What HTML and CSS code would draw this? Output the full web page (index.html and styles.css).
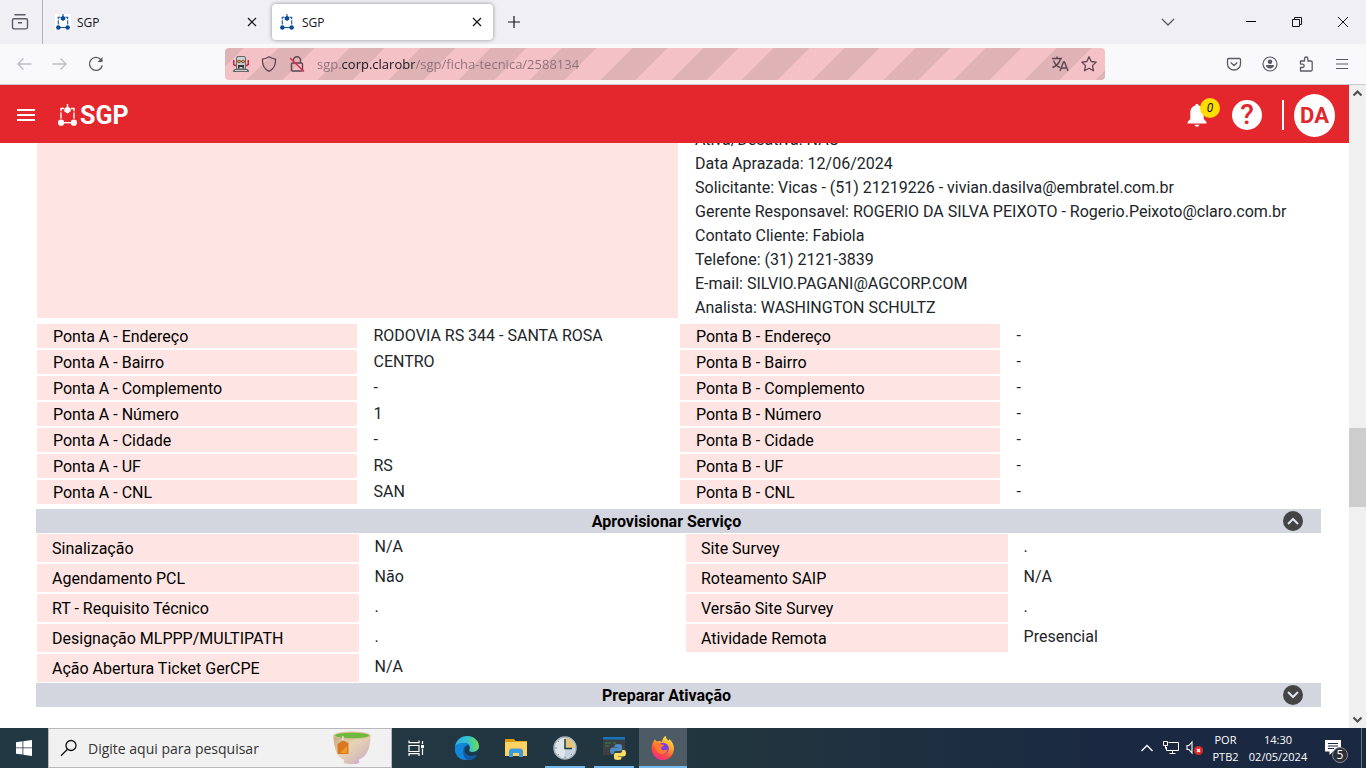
FILE: index.html
```html
<!DOCTYPE html>
<html lang="pt-BR">
<head>
<meta charset="utf-8">
<meta name="viewport" content="width=device-width, initial-scale=1">
<title>SGP</title>
<link rel="stylesheet" href="styles.css">
</head>
<body>
<svg class="defs" aria-hidden="true">
  <symbol id="nodes" viewBox="0 0 19 22">
    <g fill="none" stroke="currentColor" stroke-width="1.4"><path d="M9.500 0v5"/><path d="M3 14.500V4.500H6M16 14.500V4.500H13" stroke-dasharray="6 1.200"/><path d="M3 18.700h13"/></g>
    <g fill="currentColor"><path d="M9.500 2.500 12.700 4.500v3l-3.200 2-3.200-2v-3z"/><circle cx="3.100" cy="18.700" r="3.100"/><circle cx="15.900" cy="18.700" r="3.100"/></g>
  </symbol>
  <symbol id="cross" viewBox="0 0 16 16"><path d="M4 4l8 8M12 4l-8 8" fill="none" stroke="currentColor" stroke-width="1.200"/></symbol>
</svg>

<header class="tabbar">
  <button class="view-btn" aria-label="Firefox View">
    <svg width="18" height="18" viewBox="0 0 18 18" fill="none" stroke="currentColor" stroke-width="1.400"><path d="M4 1.700h10" stroke-linecap="round"/><path d="M3 5.700h12c1 0 1.500.6 1.500 1.500v7c0 1-.8 1.700-1.800 1.700H3.300c-1 0-1.800-.7-1.800-1.700v-7c0-1 .5-1.500 1.500-1.500zM7 9.700h4"/></svg>
  </button>
  <nav class="tabs" aria-label="Abas">
    <div class="tab">
      <span class="fav fav-white"><svg width="14" height="16"><use href="#nodes"/></svg></span>
      <span class="tab-title">SGP</span>
      <button class="tab-close" aria-label="Fechar aba"><svg width="16" height="16"><use href="#cross"/></svg></button>
    </div>
    <div class="tab tab-active">
      <span class="fav"><svg width="14" height="16"><use href="#nodes"/></svg></span>
      <span class="tab-title">SGP</span>
      <button class="tab-close" aria-label="Fechar aba"><svg width="16" height="16"><use href="#cross"/></svg></button>
    </div>
    <button class="new-tab" aria-label="Nova aba"><svg width="12" height="12" viewBox="0 0 12 12" fill="none" stroke="currentColor" stroke-width="1.200"><path d="M6 0v12M0 6h12"/></svg></button>
  </nav>
  <button class="list-tabs" aria-label="Listar abas"><svg width="14" height="8" viewBox="0 0 14 8" fill="none" stroke="currentColor" stroke-width="1.300"><path d="M1 1l6 6 6-6"/></svg></button>
  <div class="window-btns">
    <button aria-label="Minimizar"><svg width="10" height="10" viewBox="0 0 10 10"><path d="M0 4h10v1H0z"/></svg></button>
    <button aria-label="Restaurar"><svg width="10" height="10" viewBox="0 0 10 10" fill="none" stroke="currentColor"><path d="M.5 2.500h7v7h-7zM2.500 2.500v-2h7v7h-2"/></svg></button>
    <button aria-label="Fechar"><svg width="10" height="10" viewBox="0 0 10 10" fill="none" stroke="currentColor"><path d="M0 0l10 10M10 0L0 10"/></svg></button>
  </div>
</header>

<div class="toolbar">
  <div class="nav-btns">
    <button disabled aria-label="Voltar"><svg width="16" height="16" viewBox="0 0 16 16" fill="none" stroke="currentColor" stroke-width="1.300"><path d="M15.500 8H1.500M7.500 2.500 2 8l5.500 5.500"/></svg></button>
    <button disabled aria-label="Avançar"><svg width="16" height="16" viewBox="0 0 16 16" fill="none" stroke="currentColor" stroke-width="1.300"><path d="M.5 8h14M8.500 2.500 14 8l-5.500 5.500"/></svg></button>
    <button aria-label="Recarregar"><svg width="16" height="16" viewBox="0 0 16 16" fill="none" stroke="currentColor" stroke-width="1.400"><path d="M14.300 9.500A6.500 6.500 0 1 1 13 3.700L14 5"/><path d="M14.500 1v5h-5z" fill="currentColor" stroke="none"/></svg></button>
  </div>
  <div class="urlbar">
    <svg width="16" height="16" viewBox="0 0 16 16"><path d="M0 4h1.500v4L3 9v1.500L0 9zM16 4h-1.500v4L13 9v1.500L16 9z" fill="#c8203f"/><path d="M4.500 0h7L13 1.500V13H3V1.500z" fill="#66666b"/><path d="M5 1h6l1 1v10.500H4V2z" fill="#cfcfd2"/><circle cx="6" cy="5.500" r="1.800" fill="#5a4a44"/><circle cx="10" cy="5.500" r="1.800" fill="#5a4a44"/><circle cx="6" cy="5.500" r="1" fill="#f49a28"/><circle cx="10" cy="5.500" r="1" fill="#f49a28"/><path d="M5 9h6v3.500h-1.500V11h-3v1.500H5z" fill="#333338"/><path d="M0 16v-1.500L1.500 13h13l1.500 1.500V16z" fill="#66666b"/><path d="M2 14h12v1H2z" fill="#cfcfd2"/></svg>
    <svg width="16" height="16" viewBox="0 0 16 16" fill="none" stroke="currentColor" stroke-width="1.300"><path d="M8 .8c2 1.400 4 2 6.500 2.300.3 6-1.500 10-6.500 12.200C3 13.100 1.200 9.100 1.500 3.100 4 2.800 6 2.200 8 .8z"/></svg>
    <svg width="16" height="16" viewBox="0 0 16 16" fill="none" stroke="currentColor" stroke-width="1.400"><path d="M3.500 7h9c.6 0 1 .4 1 1v6c0 .6-.4 1-1 1h-9c-.6 0-1-.4-1-1V8c0-.6.400-1 1-1zM4.500 5V4.200a3.500 3.500 0 0 1 7 0V7"/><path d="M1 2l14 13.500" stroke="#e22850" stroke-width="1.500"/></svg>
    <input class="url-input" type="text" aria-label="Endereço" value="sgp.corp.clarobr/sgp/ficha-tecnica/2588134">
    <button aria-label="Traduzir"><svg width="18" height="16" viewBox="0 0 18 16" fill="none" stroke="currentColor" stroke-width="1.400"><path d="M1 2.500h10M6 .5v2M2.500 4.500c1 3 3 5.500 6.500 7M9.500 2.500C8.500 7 5.500 10 1.500 11.500M9 15l3.500-9h1L17 15M10.300 12h5.500"/></svg></button>
    <button aria-label="Favoritar"><svg width="16" height="16" viewBox="0 0 16 16" fill="none" stroke="currentColor" stroke-width="1.300" stroke-linejoin="round"><path d="M8 .8l2.200 4.700 5 .6-3.700 3.500 1 5.200L8 12.300l-4.500 2.500 1-5.200L.8 6.100l5-.6z"/></svg></button>
  </div>
  <div class="tool-btns">
    <button aria-label="Pocket"><svg width="16" height="16" viewBox="0 0 16 16" fill="none" stroke="currentColor" stroke-width="1.300"><path d="M2.500 2.500h11c.7 0 1 .4 1 1V8a6.500 6 0 0 1-13 0V3.500c0-.6.300-1 1-1zM4.700 6.500 8 9.500l3.300-3"/></svg></button>
    <button aria-label="Conta"><svg width="16" height="16" viewBox="0 0 16 16" fill="currentColor"><circle cx="8" cy="8" r="7" fill="none" stroke="currentColor" stroke-width="1.200"/><circle cx="8" cy="5.800" r="2.300"/><path d="M4 9h8c0 2.200-1.800 3.600-4 3.600S4 11.200 4 9z"/></svg></button>
    <button aria-label="Extensões"><svg width="16" height="16" viewBox="0 0 16 16" fill="none" stroke="currentColor" stroke-width="1.300" stroke-linejoin="round"><path d="M6.500 5V2.700a1.700 1.700 0 0 1 3.400 0V5h3c.8 0 1.300.5 1.300 1.300v7.400c0 .8-.5 1.300-1.300 1.300H2.500v-3.500h2a1.700 1.700 0 0 0 0-3.400h-2V5z"/></svg></button>
    <button aria-label="Menu do navegador"><svg width="14" height="12" viewBox="0 0 14 12" fill="none" stroke="currentColor" stroke-width="1.200"><path d="M1 1.500h12M1 6h12M1 10.500h12"/></svg></button>
  </div>
</div>

<div class="viewport">
  <div class="app">
    <header class="app-header">
      <button class="menu-btn" aria-label="Menu"><svg width="18" height="12" viewBox="0 0 18 12" fill="currentColor"><path d="M0 0h18v2H0zM0 5h18v2H0zM0 10h18v2H0z"/></svg></button>
      <a class="brand" href="#"><svg width="19" height="22"><use href="#nodes"/></svg><span>SGP</span></a>
      <div class="app-actions">
        <button class="bell" aria-label="Notificações"><svg width="20" height="24" viewBox="0 0 20 24" fill="currentColor"><path d="M10 1c1 0 1.700.6 1.700 1.600 3.300.8 5 3.400 5 7v6.500L19.500 19v1.500H.5V19l2.800-2.900V9.600c0-3.600 1.700-6.200 5-7C8.300 1.600 9 1 10 1zM7.700 21.800h4.600c0 1.300-1 2-2.300 2s-2.300-.7-2.300-2z"/></svg><span class="badge">0</span></button>
        <button class="help" aria-label="Ajuda">?</button>
        <span class="divider"></span>
        <button class="avatar">DA</button>
      </div>
    </header>

    <main class="content">
      <table class="sheet sheet-notes">
        <tr>
          <th scope="row"></th>
          <td><div class="notes">Ativa/Desativa: NÃO<br>Data Aprazada: 12/06/2024<br>Solicitante: Vicas - (51) 21219226 - vivian.dasilva@embratel.com.br<br>Gerente Responsavel: ROGERIO DA SILVA PEIXOTO - Rogerio.Peixoto@claro.com.br<br>Contato Cliente: Fabiola<br>Telefone: (31) 2121-3839<br>E-mail: SILVIO.PAGANI@AGCORP.COM<br>Analista: WASHINGTON SCHULTZ</div></td>
        </tr>
      </table>
      <table class="sheet sheet-ends">
        <tr><th scope="row">Ponta A - Endereço</th><td>RODOVIA RS 344 - SANTA ROSA</td><th scope="row">Ponta B - Endereço</th><td>-</td></tr>
        <tr><th scope="row">Ponta A - Bairro</th><td>CENTRO</td><th scope="row">Ponta B - Bairro</th><td>-</td></tr>
        <tr><th scope="row">Ponta A - Complemento</th><td>-</td><th scope="row">Ponta B - Complemento</th><td>-</td></tr>
        <tr><th scope="row">Ponta A - Número</th><td>1</td><th scope="row">Ponta B - Número</th><td>-</td></tr>
        <tr><th scope="row">Ponta A - Cidade</th><td>-</td><th scope="row">Ponta B - Cidade</th><td>-</td></tr>
        <tr><th scope="row">Ponta A - UF</th><td>RS</td><th scope="row">Ponta B - UF</th><td>-</td></tr>
        <tr><th scope="row">Ponta A - CNL</th><td>SAN</td><th scope="row">Ponta B - CNL</th><td>-</td></tr>
      </table>

      <div class="section-bar">
        <h2>Aprovisionar Serviço</h2>
        <button class="toggle" aria-label="Recolher" aria-expanded="true"><svg width="12" height="8" viewBox="0 0 12 8" fill="none" stroke="currentColor" stroke-width="2"><path d="M1 7l5-5 5 5"/></svg></button>
      </div>
      <div class="service">
        <table class="sheet sheet-service">
          <tr><th scope="row">Sinalização</th><td>N/A</td></tr>
          <tr><th scope="row">Agendamento PCL</th><td>Não</td></tr>
          <tr><th scope="row">RT - Requisito Técnico</th><td>.</td></tr>
          <tr><th scope="row">Designação MLPPP/MULTIPATH</th><td>.</td></tr>
          <tr><th scope="row">Ação Abertura Ticket GerCPE</th><td>N/A</td></tr>
        </table>
        <table class="sheet sheet-service">
          <tr><th scope="row">Site Survey</th><td>.</td></tr>
          <tr><th scope="row">Roteamento SAIP</th><td>N/A</td></tr>
          <tr><th scope="row">Versão Site Survey</th><td>.</td></tr>
          <tr><th scope="row">Atividade Remota</th><td>Presencial</td></tr>
        </table>
      </div>

      <div class="section-bar section-bar-next">
        <h2>Preparar Ativação</h2>
        <button class="toggle" aria-label="Expandir" aria-expanded="false"><svg width="12" height="8" viewBox="0 0 12 8" fill="none" stroke="currentColor" stroke-width="2"><path d="M1 1l5 5 5-5"/></svg></button>
      </div>
    </main>
  </div>
  <div class="scrollbar" aria-hidden="true">
    <svg width="17" height="17" viewBox="0 0 17 17" fill="none" stroke="currentColor" stroke-width="2.200"><path d="M4.500 10.500l4-4 4 4"/></svg>
    <span class="track-before"></span><span class="thumb"></span><span class="track-after"></span>
    <svg width="17" height="17" viewBox="0 0 17 17" fill="none" stroke="currentColor" stroke-width="2.200"><path d="M4.500 6.500l4 4 4-4"/></svg>
  </div>
</div>

<footer class="taskbar">
  <button class="task" aria-label="Iniciar"><svg width="16" height="16" viewBox="0 0 16 16" fill="#fff"><path d="M0 2.200 6.500 1.300v6.200H0zM7.300 1.200 16 0v7.500H7.300zM0 8.300h6.500v6.300L0 13.700zM7.300 8.300H16V16l-8.700-1.200z"/></svg></button>
  <label class="search">
    <svg width="18" height="18" viewBox="0 0 18 18" fill="none" stroke="#111" stroke-width="1.300"><circle cx="11" cy="6.500" r="5"/><path d="M7.500 10.200 1 16.800"/></svg>
    <input type="text" aria-label="Pesquisar" placeholder="Digite aqui para pesquisar">
    <svg width="38" height="34" viewBox="0 0 38 34"><defs><linearGradient id="cup" x1="0" y1="0" x2="1" y2="1"><stop offset="0" stop-color="#c4a57c"/><stop offset=".4" stop-color="#e6d4b4"/><stop offset=".7" stop-color="#d8bfb8"/><stop offset="1" stop-color="#c88cf0"/></linearGradient></defs><path d="M.5 4c0 13 3 22 11 25-1 1-1 3 0 3.300 4 1.200 10 1.200 14 0 1-.3 1-2 0-3.300 9-4 12-12 12-25z" fill="url(#cup)"/><ellipse cx="19" cy="4.500" rx="18.500" ry="3.900" fill="#d9c197"/><ellipse cx="19" cy="4.500" rx="17" ry="2.800" fill="#6fb83e"/><path d="M10 5v6" stroke="#ddd" stroke-width="1.500"/><path d="M4.500 13l5.500-3.500 5.500 2.500V23h-11z" fill="#d9781f"/><path d="M7 22l7-7v7z" fill="#ef9a2c"/></svg>
  </label>
  <button class="task" aria-label="Visão de tarefas"><svg width="17" height="16" viewBox="0 0 17 16" fill="none" stroke="#fff" stroke-width="1.200"><path d="M1 5.500h10v6H1zM1 .5v2.200h10V.5M1 16v-2.300h10V16M14.500 1v3M14.500 8.500V15"/><path d="M13 5h3v3h-3z" fill="#fff" stroke="none"/></svg></button>
  <div class="apps">
    <button class="task" aria-label="Microsoft Edge"><svg width="24" height="24" viewBox="0 0 24 24"><defs><linearGradient id="edge" x1="0" y1=".4" x2="1" y2=".3"><stop offset="0" stop-color="#2db0e8"/><stop offset=".55" stop-color="#35c1c9"/><stop offset="1" stop-color="#72e04c"/></linearGradient></defs><circle cx="12" cy="12" r="12" fill="#0b62b8"/><path d="M0 11C1 4 6 0 12 0c7 0 12 5 12 10 0 4-3 6-6.500 6-3 0-3.700-1-3.300-2 2-4-.5-7-4.500-7C5 7 1 9 0 11z" fill="url(#edge)"/><path d="M0 12c1-4 5-5.500 9-5 1.500.2 3 1 4 2-3-.5-5 2-4.700 5.500C8.700 19 12 23 17 22.500 7 27-1 20 0 12z" fill="#1287d8"/><path d="M14.200 14c-.4 1 .3 2 3.300 2 2.500 0 5-1 6.300-3.500l.7 4-3.200 2.500c-6 2.500-12 0-11.800-5 0-2 1.500-3.800 3.500-4.500 1.500 1 2 2.800 1.200 4.500z" fill="#1d3a4c"/><path d="M8.500 14c.3 5 4.500 9 11 6.500 1-.4 2-1.200 2.800-2C20 23 16 24.500 12.500 24 9 22.500 7.500 18 8.500 14z" fill="#1557a0"/></svg></button>
    <button class="task" aria-label="Explorador de arquivos"><svg width="22" height="18" viewBox="0 0 22 18"><path d="M0 0h9l1.500 2H22v15H0z" fill="#e8a920"/><path d="M0 3h22v14H0z" fill="#fcd462"/><path d="M0 0h9v3H0z" fill="#d99a12"/><path d="M4 18v-6.500L6 9.500h10l2 2V18h-4v-4H8v4z" fill="#3e9ae0"/></svg></button>
    <button class="task task-running" aria-label="Relógio"><svg width="24" height="24" viewBox="0 0 24 24"><circle cx="12" cy="12" r="11" fill="#dce5ea" stroke="#a9b3b8" stroke-width="1.500"/><path d="M12 12V2a10 10 0 0 1 10 10z" fill="#e3c478"/><path d="M12 12h10a10 10 0 0 1-10 10z" fill="#c2d3dd"/><path d="M12 3v9.500h7" fill="none" stroke="#1e3550" stroke-width="1.500"/><path d="M12 20v2M2 12h2M5 5l1 1M5 19l1-1M19 19l-1-1" stroke="#7b8d98"/></svg></button>
    <button class="task task-running" aria-label="Python"><svg width="24" height="24" viewBox="0 0 24 24"><path d="M1 1h22v18H1z" fill="#3c3f41"/><path d="M1 1h22v2.500H1z" fill="#1673ba"/><path d="M3 7h6M3 10h4M11 7h3" stroke="#2d8a50" stroke-width="1.200"/><path d="M16 8c3 0 4 .8 4 2.500V13c0 1.500-1 2-2 2h-4c-1.500 0-2.200 1-2.200 3H10c-1.500 0-2-1.500-2-3.500S9 11.500 11 11.500h5V11h-3.500v-1c0-1.300 1-2 3.500-2z" fill="#4c8bc4"/><path d="M16 24c-3 0-4-.8-4-2.500V19c0-1.500 1-2 2-2h4c1.500 0 2.200-1 2.200-3H22c1.500 0 2 1.500 2 3.500s-1 3-3 3h-5v.5h3.500v1c0 1.300-1 2-3.500 2z" fill="#ffdd63"/></svg></button>
    <button class="task task-running task-focused" aria-label="Firefox"><svg width="24" height="24" viewBox="0 0 24 24"><defs><linearGradient id="fox" x1=".8" y1="0" x2=".3" y2="1"><stop offset="0" stop-color="#fff04a"/><stop offset=".4" stop-color="#ffa02c"/><stop offset=".7" stop-color="#ff4f3c"/><stop offset="1" stop-color="#f02a8c"/></linearGradient></defs><path d="M4 3c.3 1 1 2 2 2.600C8 4.700 9.500 5 11 6c.2-3 1.800-5.200 3.800-6 0 2 1 3.200 2.700 4.600.5-.3.6-1 .5-1.600 3.500 2.500 5 6 5 9.500A11.200 11.200 0 0 1 12 24 11.200 11.200 0 0 1 .7 12.500C.7 9 2 6 4 3z" fill="url(#fox)"/><circle cx="12" cy="12.500" r="5.800" fill="#7a3fe0"/><path d="M4 8c2-1.500 4.500-1.200 6 .3 1.200.2 2.800.2 3 1-.3 1.200-2 1.400-2.700 2.300-.3 1 0 1.800.7 2.300 2 1 4-.6 5.500.2-1 3-3.500 4.400-6 4-4-.7-7-5-6.500-10.100z" fill="#ff7a30"/></svg></button>
  </div>
  <div class="tray">
    <button aria-label="Ícones ocultos"><svg width="12" height="8" viewBox="0 0 12 8" fill="none" stroke="#fff" stroke-width="1.300"><path d="M.5 7 6 1.500 11.500 7"/></svg></button>
    <button aria-label="Rede"><svg width="17" height="14" viewBox="0 0 17 14" fill="none" stroke="#fff"><path d="M5.500 1.500h10v8h-12V6M9.500 9.500v3M6.500 12.500h6M.5.500h4v4h-4zM2.500 4.500v3h1"/></svg></button>
    <button aria-label="Volume"><svg width="18" height="16" viewBox="0 0 18 16"><path d="M1 5.500h2l3-3.500v11l-3-3.500H1z" fill="none" stroke="#fff" stroke-width="1.100"/><circle cx="12.500" cy="10.500" r="4.500" fill="#e02828"/><path d="M11 9l3 3M14 9l-3 3" stroke="#fff" stroke-width="1.300"/></svg></button>
    <button class="lang">POR<br>PTB2</button>
    <button class="clock">14:30<br>02/05/2024</button>
    <button class="action-center" aria-label="5 notificações"><svg width="16" height="16" viewBox="0 0 16 16"><path d="M0 0h16v11.500h-8L4.500 15v-3.500H0z" fill="#fff"/><path d="M3 3.500h10M3 6h10M3 8.500h6" stroke="#1b2a42" stroke-width="1.200"/></svg><span class="count">5</span></button>
    <button class="show-desktop" aria-label="Mostrar área de trabalho"></button>
  </div>
</footer>
</body>
</html>
```
FILE: styles.css
```css
* {
  box-sizing: border-box;
}

html,
body {
  height: 100%;
}

body {
  margin: 0;
  display: flex;
  flex-direction: column;
  overflow: hidden;
  background: #fff;
  color: #15141a;
  font-family: "Open Sans", "Noto Sans", sans-serif;
  font-size: 12px;
}

button {
  display: flex;
  align-items: center;
  justify-content: center;
  margin: 0;
  padding: 0;
  border: 0;
  background: none;
  color: inherit;
  font: inherit;
}

svg {
  display: block;
  flex: none;
}

.defs {
  display: none;
}

/* Browser tabs */

.tabbar {
  display: flex;
  flex: none;
  height: 44px;
  background: #f0eff4;
}

.view-btn {
  width: 43px;
  padding-right: 3px;
  border-right: 1px solid #b4b3b9;
  color: #5b5b66;
}

.tabs {
  display: flex;
  flex: 1;
  align-items: center;
  gap: 4px;
  padding-left: 4px;
}

.tab {
  display: flex;
  align-items: center;
  width: 221px;
  height: 36px;
  padding: 0 4px 0 8px;
  border-radius: 4px;
}

.tab-active {
  background: #fff;
  box-shadow: 0 0 4px rgba(0, 0, 0, 0.4);
}

.fav {
  display: flex;
  width: 16px;
  margin-right: 6px;
  color: #0b4a94;
}

.fav-white {
  justify-content: center;
  background: #fff;
}

.tab-title {
  flex: 1;
}

.tab-close {
  width: 24px;
  height: 24px;
}

.new-tab {
  width: 34px;
  height: 32px;
}

.list-tabs {
  width: 36px;
  margin-right: 42px;
  color: #5b5b66;
}

.window-btns {
  display: flex;
}

.window-btns button {
  width: 46px;
}

/* Browser toolbar */

.toolbar {
  display: flex;
  flex: none;
  align-items: center;
  height: 41px;
  padding: 0 6px;
  border-bottom: 1px solid #ccccd0;
  background: #f9f9fb;
  color: #5b5b66;
}

.nav-btns,
.tool-btns {
  display: flex;
}

.nav-btns button,
.tool-btns button {
  width: 36px;
  height: 32px;
}

.nav-btns button:disabled {
  color: #bebec3;
}

.urlbar {
  display: flex;
  flex: 1;
  align-items: center;
  gap: 12px;
  height: 32px;
  margin: 0 111px;
  padding: 0 8px;
  border-radius: 4px;
  background: repeating-linear-gradient(135deg, #dfb2b6 0 13px, #f4c2c6 13px 38px, #dfb2b6 38px 50px);
  color: #5b464e;
}

.url-input {
  flex: 1;
  min-width: 0;
  height: 24px;
  padding: 0;
  border: 0;
  outline: 0;
  background: linear-gradient(90deg, #8f6f76 0 25px, #15141a 25px 98px, #8f6f76 98px);
  -webkit-background-clip: text;
  background-clip: text;
  color: transparent;
  font: inherit;
  font-size: 13px;
}

/* Page */

.viewport {
  display: flex;
  flex: 1;
  min-height: 0;
}

.app {
  display: flex;
  flex: 1;
  flex-direction: column;
  min-width: 0;
  font-family: Roboto, "Liberation Sans", sans-serif;
  font-size: 16px;
}

.app-header {
  display: flex;
  flex: none;
  align-items: center;
  height: 58px;
  padding: 2px 14px 0 17px;
  background: #e4262d;
  color: #fff;
}

.menu-btn {
  height: 32px;
}

.brand {
  display: flex;
  align-items: center;
  gap: 3px;
  margin-left: 23px;
  color: #fff;
  font-size: 25px;
  font-weight: 700;
  line-height: 32px;
  text-decoration: none;
}

.brand span {
  padding-top: 2px;
}

.app-actions {
  display: flex;
  align-items: center;
  margin-left: auto;
}

.bell {
  position: relative;
  margin-right: 25px;
}

.badge {
  position: absolute;
  top: -5px;
  left: 13px;
  width: 20px;
  height: 20px;
  border-radius: 50%;
  background: #fd0;
  color: #111;
  font-size: 12px;
  font-style: italic;
  line-height: 20px;
  text-align: center;
}

.help {
  width: 30px;
  height: 30px;
  border-radius: 50%;
  background: #fff;
  color: #e4262d;
  font-size: 28px;
  font-weight: 500;
  line-height: 30px;
}

.divider {
  width: 2px;
  height: 30px;
  margin: 0 10px 0 20px;
  background: #fff;
}

.avatar {
  width: 41px;
  height: 43px;
  border-radius: 50%;
  background: #fff;
  color: #e4262d;
  font-size: 22px;
  font-weight: 700;
}

.content {
  flex: 1;
  min-height: 0;
  overflow: hidden;
  padding: 0 28px 0 36px;
}

.sheet {
  width: 100%;
  border-collapse: separate;
  border-spacing: 2px;
  table-layout: fixed;
}

.sheet th,
.sheet td {
  padding: 0 15px;
  line-height: 24px;
  text-align: left;
}

.sheet th {
  padding-top: 2px;
  background: #fee5e3;
  color: #000;
  font-weight: 400;
  line-height: 22px;
}

.sheet td {
  color: #212529;
}

.sheet-notes,
.sheet-ends {
  width: calc(100% + 3px);
  margin-left: -1px;
}

.sheet-notes {
  margin-top: -17px;
}

.sheet-notes td {
  padding-right: 0;
}

.notes {
  margin-bottom: -2px;
}

.sheet-ends {
  margin-top: 2px;
}

.sheet-ends th {
  padding-left: 16px;
}

.section-bar {
  display: flex;
  align-items: center;
  height: 24px;
  margin-top: 3px;
  padding: 0 18px 0 14px;
  background: #d3d6df;
}

.section-bar h2 {
  flex: 1;
  margin: 0;
  padding-top: 2px;
  color: #000;
  font-size: 16px;
  font-weight: 700;
  line-height: 22px;
  text-align: center;
}

.section-bar-next {
  margin-top: -1px;
}

.toggle {
  width: 20px;
  height: 20px;
  border-radius: 50%;
  background: #444;
  color: #dfe5ef;
}

.service {
  display: grid;
  grid-template-columns: 1fr 1fr;
  align-items: start;
  gap: 10px;
  margin: -1px -2px 0 -1px;
}

.sheet-service th {
  width: 50.8%;
  height: 28px;
}

.sheet-service td {
  padding: 0 14px 2px;
}

.scrollbar {
  display: flex;
  flex: none;
  flex-direction: column;
  width: 17px;
  background: #f0f0f0;
  color: #505050;
}

.track-before {
  flex: 326;
}

.thumb {
  flex: 79;
  background: #cdcdcd;
}

.track-after {
  flex: 204;
}

/* Desktop taskbar */

.taskbar {
  display: flex;
  flex: none;
  height: 40px;
  background: linear-gradient(90deg, #223943, #21353f 55%, #1a2941 80%);
  color: #fff;
}

.task {
  width: 48px;
  height: 40px;
}

.search {
  display: flex;
  align-items: center;
  width: 344px;
  padding: 0 20px 0 11px;
  border: 1px solid #b8b8ba;
  background: #f1f1f1;
}

.search input {
  flex: 1;
  min-width: 0;
  margin-left: 10px;
  padding: 0;
  border: 0;
  outline: 0;
  background: none;
  font: inherit;
  font-size: 14px;
}

.search input::placeholder {
  color: #333;
  opacity: 1;
}

.apps {
  display: flex;
  gap: 1px;
  margin-left: 3px;
}

.task-running {
  background: linear-gradient(#76b9ed, #76b9ed) center bottom / 40px 2px no-repeat;
}

.task-focused {
  background-color: #4d5c64;
  background-size: 48px 2px;
}

.tray {
  display: flex;
  align-items: stretch;
  margin-left: auto;
  font-size: 11px;
  line-height: 17px;
}

.tray button {
  width: 24px;
}

.tray .lang {
  width: 37px;
}

.tray .clock {
  width: 68px;
}

.tray .action-center {
  position: relative;
  width: 42px;
  margin-right: 7px;
}

.count {
  position: absolute;
  top: 19px;
  left: 20px;
  width: 16px;
  height: 16px;
  border: 1px solid #8a8d92;
  border-radius: 50%;
  background: #2b2f36;
  font-size: 12px;
  line-height: 14px;
  text-align: center;
}

.tray .show-desktop {
  width: 5px;
  border-left: 1px solid #66707f;
}
```
